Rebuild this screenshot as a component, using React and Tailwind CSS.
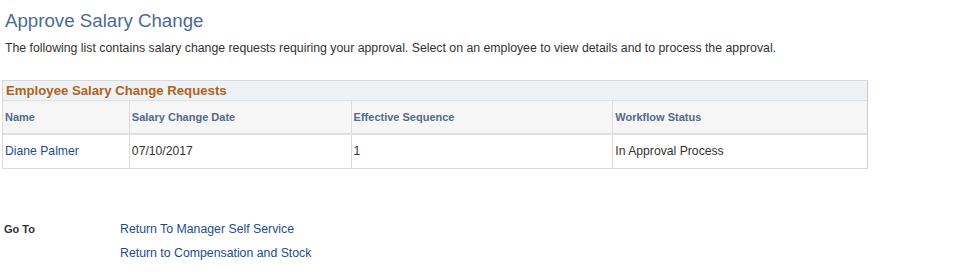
import React from "react";

const columns = [
  { label: "Name", width: "w-[126px]" },
  { label: "Salary Change Date", width: "w-[222px]" },
  { label: "Effective Sequence", width: "w-[262px]" },
  { label: "Workflow Status", width: "w-[255px]" },
];

const rows = [
  { name: "Diane Palmer", date: "07/10/2017", seq: "1", status: "In Approval Process" },
];

export default function App() {
  return (
    <div className="min-h-[277px] bg-white font-['Liberation_Sans',Arial,sans-serif] text-[#333]">
      <div className="pl-[5px] pt-[10px]">
        <h1 className="text-[18.7px] leading-[22px] text-[#4a6b93]">Approve Salary Change</h1>
        <p className="mt-[9px] text-[12.3px] leading-[14px] text-[#333]">
          The following list contains salary change requests requiring your approval. Select on an employee to view details and to process the approval.
        </p>
      </div>

      {/* grid */}
      <div className="ml-[2px] mt-[25px] w-[866px] border border-[#d8dadd] border-r-[#c9ccd1]">
        <div className="h-[20px] border-b border-[#dde1e4] bg-[#eef2f4] pl-[3px] text-[13.2px] font-bold leading-[19px] text-[#b0621c]">
          Employee Salary Change Requests
        </div>
        <div className="flex h-[34px] border-b-2 border-[#dfdfdf] bg-[#f6f6f6]">
          {columns.map((c, i) => (
            <div
              key={c.label}
              className={`${c.width} flex items-center pl-[2px] text-[11px] font-bold text-[#54698c] ${i > 0 ? "border-l border-[#dcdcdc]" : ""}`}
            >
              {c.label}
            </div>
          ))}
        </div>
        {rows.map((r) => (
          <div key={r.name} className="flex h-[33px] text-[12.2px]">
            <div className="flex w-[126px] items-center pl-[2px]">
              <a href="#" className="text-[#1c4c8f]">{r.name}</a>
            </div>
            <div className="flex w-[222px] items-center border-l border-[#dcdcdc] pl-[2px]">{r.date}</div>
            <div className="flex w-[262px] items-center border-l border-[#dcdcdc] pl-[2px]">{r.seq}</div>
            <div className="flex w-[255px] items-center border-l border-[#dcdcdc] pl-[2px]">{r.status}</div>
          </div>
        ))}
      </div>

      {/* go to links */}
      <div className="mt-[52px] flex pl-[4px]">
        <div className="w-[116px] text-[11px] font-bold leading-[16px]">Go To</div>
        <div className="flex flex-col gap-[8px] text-[12.3px] leading-[16px]">
          <a href="#" className="text-[#1c4c8f]">Return To Manager Self Service</a>
          <a href="#" className="text-[#1c4c8f]">Return to Compensation and Stock</a>
        </div>
      </div>
    </div>
  );
}
